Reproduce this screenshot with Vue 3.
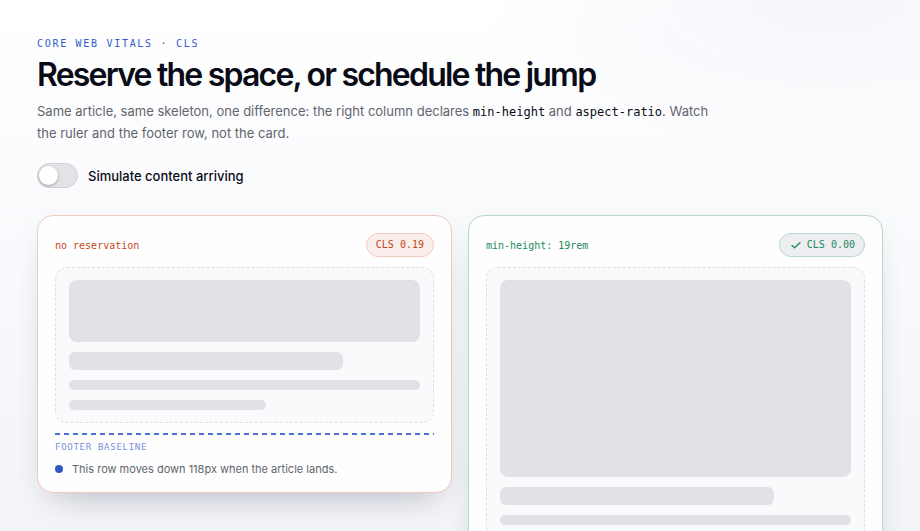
<script setup>
import {ref} from "vue";

const arrived = ref(false);

const cards = [
  { id: 'loose', label: 'no reservation', score: 'CLS 0.19', stable: false, note: 'This row moves down 118px when the article lands.' },
  { id: 'reserved', label: 'min-height: 19rem', score: 'CLS 0.00', stable: true, note: '' }
];
</script>

<template>
  <main class="page">
    <header class="intro">
      <p class="eyebrow">CORE WEB VITALS · CLS</p>
      <h1>Reserve the space, or schedule the jump</h1>
      <p class="lead">
        Same article, same skeleton, one difference: the right column declares
        <code>min-height</code> and <code>aspect-ratio</code>. Watch the ruler and the footer row, not the card.
      </p>
    </header>

    <label class="toggle" for="simulate">
      <input id="simulate" v-model="arrived" type="checkbox" role="switch">
      <span>Simulate content arriving</span>
    </label>

    <div class="columns">
      <section
        v-for="card in cards"
        :key="card.id"
        class="card"
        :class="[card.id, { arrived }]"
      >
        <div class="card-head">
          <h2>{{ card.label }}</h2>
          <span class="badge">
            <svg v-if="card.stable" width="10" height="10" viewBox="0 0 10 10" aria-hidden="true">
              <path d="M1 5.4 3.6 7.8 9 2.8" />
            </svg>
            {{ card.score }}
          </span>
        </div>

        <div class="frame">
          <div class="bone media"></div>
          <div class="bone title"></div>
          <div class="bone line"></div>
          <div class="bone line short"></div>
        </div>

        <div v-if="card.note" class="ruler">
          <p>FOOTER BASELINE</p>
        </div>
        <footer v-if="card.note">
          <i class="dot"></i>
          <p>{{ card.note }}</p>
        </footer>
      </section>
    </div>
  </main>
</template>

<style>
body {
  margin: 0;
  background: #f3f4f8;
}
</style>

<style scoped>
.page {
  box-sizing: border-box;
  min-height: 100vh;
  padding: 37px;
  font-family: Inter, "Liberation Sans", sans-serif;
  color: #090c16;
  background:
    radial-gradient(ellipse 340px 150px at 90% 0, #f5f6fb, rgba(245, 246, 251, 0)),
    linear-gradient(#fff 0, #fafbfd 200px, #f3f4f8 500px);
}

p,
h1,
h2 {
  margin: 0;
}

.eyebrow,
code,
h2,
.badge,
.ruler {
  font-family: "DejaVu Sans Mono", "Liberation Mono", monospace;
}

.eyebrow {
  font-size: 10px;
  line-height: 14px;
  letter-spacing: 0.17em;
  color: #2f5cc9;
}

h1 {
  margin-top: 6px;
  font-size: 32px;
  font-weight: 600;
  line-height: 36px;
  letter-spacing: -0.056em;
}

.lead {
  max-width: 680px;
  margin-top: 8px;
  font-size: 13px;
  line-height: 21px;
  color: #62656d;
}

code {
  font-size: 12px;
  color: #090c16;
}

.toggle {
  display: flex;
  align-items: center;
  gap: 10px;
  width: fit-content;
  margin-top: 19px;
  font-size: 13px;
  font-weight: 500;
  cursor: pointer;
}

.toggle input {
  appearance: none;
  box-sizing: border-box;
  width: 41px;
  height: 25px;
  margin: 0;
  padding: 2px 1px;
  border: 1px solid #d0d1d4;
  border-radius: 13px;
  background: #e2e3e6;
  cursor: pointer;
}

.toggle input::before {
  content: "";
  display: block;
  width: 19px;
  height: 19px;
  border-radius: 50%;
  background: #fff;
  box-shadow: 0 1px 3px rgba(10, 15, 30, 0.3);
  transition: margin 0.2s;
}

.toggle input:checked {
  background: #2f5cc9;
}

.toggle input:checked::before {
  margin-left: 18px;
}

.columns {
  display: grid;
  grid-template-columns: 1fr 1fr;
  align-items: start;
  gap: 16px;
  margin-top: 27px;
}

.card {
  --tone: #c2481b;
  --edge: #f0c9bd;
  --tint: #f9eeeb;
  padding: 17px 17px 14px;
  border: 1px solid var(--edge);
  border-radius: 16px;
  background: #fefefe;
  box-shadow: 0 20px 32px -20px rgba(20, 25, 45, 0.26), 0 6px 28px rgba(20, 25, 45, 0.04);
}

.card.reserved {
  --tone: #21895a;
  --edge: #b5d9cb;
  --tint: #eceef1;
}

.card-head {
  display: flex;
  align-items: center;
  justify-content: space-between;
  margin-bottom: 10px;
}

h2 {
  font-size: 10px;
  font-weight: 400;
  color: var(--tone);
}

.badge {
  display: flex;
  align-items: center;
  gap: 6px;
  padding: 0 9px;
  border: 1px solid var(--edge);
  border-radius: 12px;
  background: var(--tint);
  font-size: 10px;
  line-height: 22px;
  color: var(--tone);
}

.badge svg {
  margin-left: 2px;
  fill: none;
  stroke: currentColor;
  stroke-width: 1.3;
  stroke-linecap: round;
  stroke-linejoin: round;
}

.frame {
  display: flex;
  flex-direction: column;
  gap: 10px;
  padding: 12px 13px;
  border: 1px dashed #dfe0e4;
  border-radius: 12px;
  background: #f9fafc;
}

.bone {
  border-radius: 6px;
  background: #e1e2e5;
}

.media {
  height: 62px;
  border-radius: 8px;
}

.arrived .media {
  height: 180px;
}

.reserved .media {
  height: auto;
  aspect-ratio: 16 / 9;
}

.title {
  width: 78%;
  height: 18px;
}

.line {
  height: 10px;
}

.short {
  width: 56%;
}

.ruler {
  margin-top: 10px;
  padding-top: 8px;
  background: repeating-linear-gradient(90deg, #4b6fd6 0 5px, transparent 5px 9px) 0 0 / 100% 2px no-repeat;
  font-size: 9px;
  line-height: 12px;
  letter-spacing: 0.08em;
  color: #7890db;
}

footer {
  display: flex;
  align-items: center;
  gap: 9px;
  margin-top: 7px;
  font-size: 11px;
  line-height: 18px;
  color: #62656d;
}

.dot {
  width: 8px;
  height: 8px;
  border-radius: 50%;
  background: #2f58c0;
}
</style>
